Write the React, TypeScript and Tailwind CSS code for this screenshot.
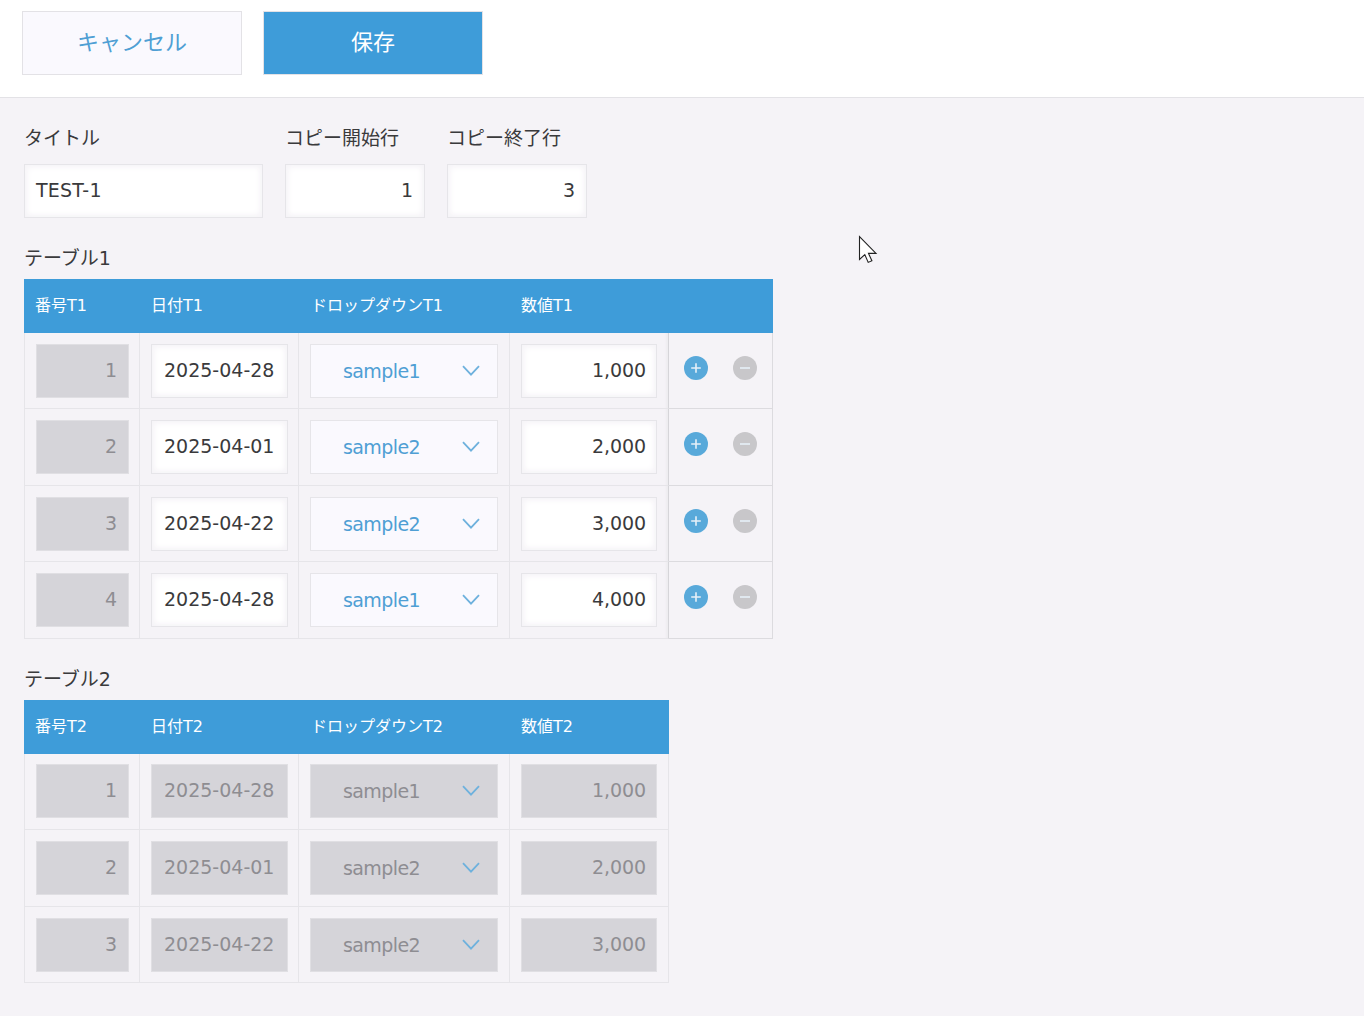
import React from "react";

type Row = { no: number; date: string; option: string; amount: string };

const rows: Row[] = [
  { no: 1, date: "2025-04-28", option: "sample1", amount: "1,000" },
  { no: 2, date: "2025-04-01", option: "sample2", amount: "2,000" },
  { no: 3, date: "2025-04-22", option: "sample2", amount: "3,000" },
  { no: 4, date: "2025-04-28", option: "sample1", amount: "4,000" },
];

const enabledBox =
  "border-[#e6e5e9] bg-white text-[#3a3a3c] shadow-[inset_2px_2px_6px_#f5f3f7,inset_-2px_-2px_6px_#f5f3f7]";
const disabledBox = "border-[#e0dfe3] bg-[#d5d4d9] text-[#8e8d92]";

function Field({ children, width, disabled = false, right = false }: {
  children: React.ReactNode; width: string; disabled?: boolean; right?: boolean;
}) {
  return (
    <div
      className={`flex h-[54px] items-center border pr-[11px] pl-[11px] pb-[2px] text-[19px] leading-[30px] whitespace-nowrap ${width} ${
        right ? "justify-end" : ""
      } ${disabled ? disabledBox : enabledBox}`}
    >
      {children}
    </div>
  );
}

function Dropdown({ value, disabled }: { value: string; disabled: boolean }) {
  return (
    <div
      className={`flex h-[54px] w-[188px] items-center justify-between border pr-[17px] pl-8 text-[19px] leading-[30px] tracking-[-0.6px] ${
        disabled ? "border-[#e0dfe3] bg-[#d5d4d9] text-[#8e8d92]" : "border-[#e6e5e9] bg-[#faf9fe] text-[#4f9fd4]"
      }`}
    >
      <span>{value}</span>
      <svg width="18" height="12" viewBox="0 0 18 12" fill="none" stroke="#6eb1dd" strokeWidth="1.8">
        <path d="M1 1.2 L9 9.6 L17 1.2" />
      </svg>
    </div>
  );
}

function RoundIcon({ plus = false }: { plus?: boolean }) {
  return (
    <svg width="24" height="24" viewBox="0 0 24 24">
      <circle cx="12" cy="12" r="12" fill={plus ? "#58a9da" : "#c8c7ca"} />
      <path d={plus ? "M7.2 12H16.8M12 7.2V16.8" : "M7 12H17"} stroke="#e6f0f8" strokeWidth="1.6" />
    </svg>
  );
}

const cell = "border-r border-b border-[#e6e5e9] pl-[11px]";

function Table({ suffix, data, readOnly = false }: { suffix: string; data: Row[]; readOnly?: boolean }) {
  return (
    <div className={readOnly ? "w-[645px]" : "w-[749px]"}>
      <div className="flex h-[54px] bg-[#3e9cd9] pt-[15px] text-[16px] leading-6 text-white">
        <div className="w-[116px] pl-[11px]">番号{suffix}</div>
        <div className="w-[159px] pl-[11px]">日付{suffix}</div>
        <div className="w-[211px] pl-[12px]">ドロップダウン{suffix}</div>
        <div className="w-[159px] pl-[11px]">数値{suffix}</div>
      </div>
      {data.map((r, i) => (
        <div key={r.no} className={`flex ${i % 2 ? "h-[77px]" : "h-[76px]"}`}>
          <div className={`${cell} w-[116px] border-l ${readOnly && i === 0 ? "pt-[10px]" : "pt-[11px]"}`}>
            <Field width="w-[93px]" disabled right>{r.no}</Field>
          </div>
          <div className={`${cell} w-[159px] ${readOnly && i === 0 ? "pt-[10px]" : "pt-[11px]"}`}>
            <Field width="w-[137px]" disabled={readOnly}><span className="pl-[1px]">{r.date}</span></Field>
          </div>
          <div className={`${cell} w-[211px] ${readOnly && i === 0 ? "pt-[10px]" : "pt-[11px]"}`}>
            <Dropdown value={r.option} disabled={readOnly} />
          </div>
          <div
            className={`${cell} w-[159px] ${readOnly && i === 0 ? "pt-[10px]" : "pt-[11px]"} ${
              readOnly ? "" : "border-r-[#d6d5d9] shadow-[inset_-3px_0_2px_-1px_#eeecf0]"
            }`}
          >
            <Field width="w-[136px]" disabled={readOnly} right><span className="-mr-px tracking-[-0.1px]">{r.amount}</span></Field>
          </div>
          {!readOnly && (
            <div className="flex w-[104px] gap-[25px] border-r border-b border-[#dcdbdf] pt-[23px] pl-[15px]">
              <RoundIcon plus />
              <RoundIcon />
            </div>
          )}
        </div>
      ))}
    </div>
  );
}

export default function App() {
  return (
    <div className="relative h-[1016px] overflow-hidden bg-[#f5f3f7] font-['DejaVu_Sans','Noto_Sans_CJK_JP',sans-serif] text-[#3a3a3c]">
      <header className="flex h-[98px] gap-[21px] border-b border-[#e3e2e6] bg-white pt-[11px] pl-[22px] text-[22px]">
        <button className="h-16 w-[220px] border border-[#e3e2e6] bg-[#faf9fe] leading-[62px] text-[#4f9fd4]">キャンセル</button>
        <button className="h-16 w-[220px] border border-[#e3e2e6] bg-[#3e9cd9] leading-[62px] text-white">保存</button>
      </header>
      <main className="pl-6 text-[19px]">
        <div className="flex gap-[22px] pt-[26px]">
          <div>
            <div className="h-10 leading-[28px]">タイトル</div>
            <Field width="w-[239px]"><span className="tracking-[0.2px]">TEST-1</span></Field>
          </div>
          <div>
            <div className="h-10 leading-[28px]">コピー開始行</div>
            <Field width="w-[140px]" right>1</Field>
          </div>
          <div>
            <div className="h-10 leading-[28px]">コピー終了行</div>
            <Field width="w-[140px]" right>3</Field>
          </div>
        </div>
        <h2 className="mt-[26px] h-[35px] leading-[28px]">テーブル1</h2>
        <Table suffix="T1" data={rows} />
        <h2 className="mt-[26px] h-[35px] leading-[28px]">テーブル2</h2>
        <Table suffix="T2" data={rows.slice(0, 3)} readOnly />
      </main>
      <svg className="absolute top-[235px] left-[858px]" width="20" height="30" viewBox="0 0 20 30">
        <path
          d="M1.5 1.5 V24.5 L6.8 19.6 L10.2 27.4 L13.9 25.8 L10.5 18.4 H18 Z"
          fill="#fff" stroke="#222" strokeWidth="1.1"
        />
      </svg>
    </div>
  );
}
